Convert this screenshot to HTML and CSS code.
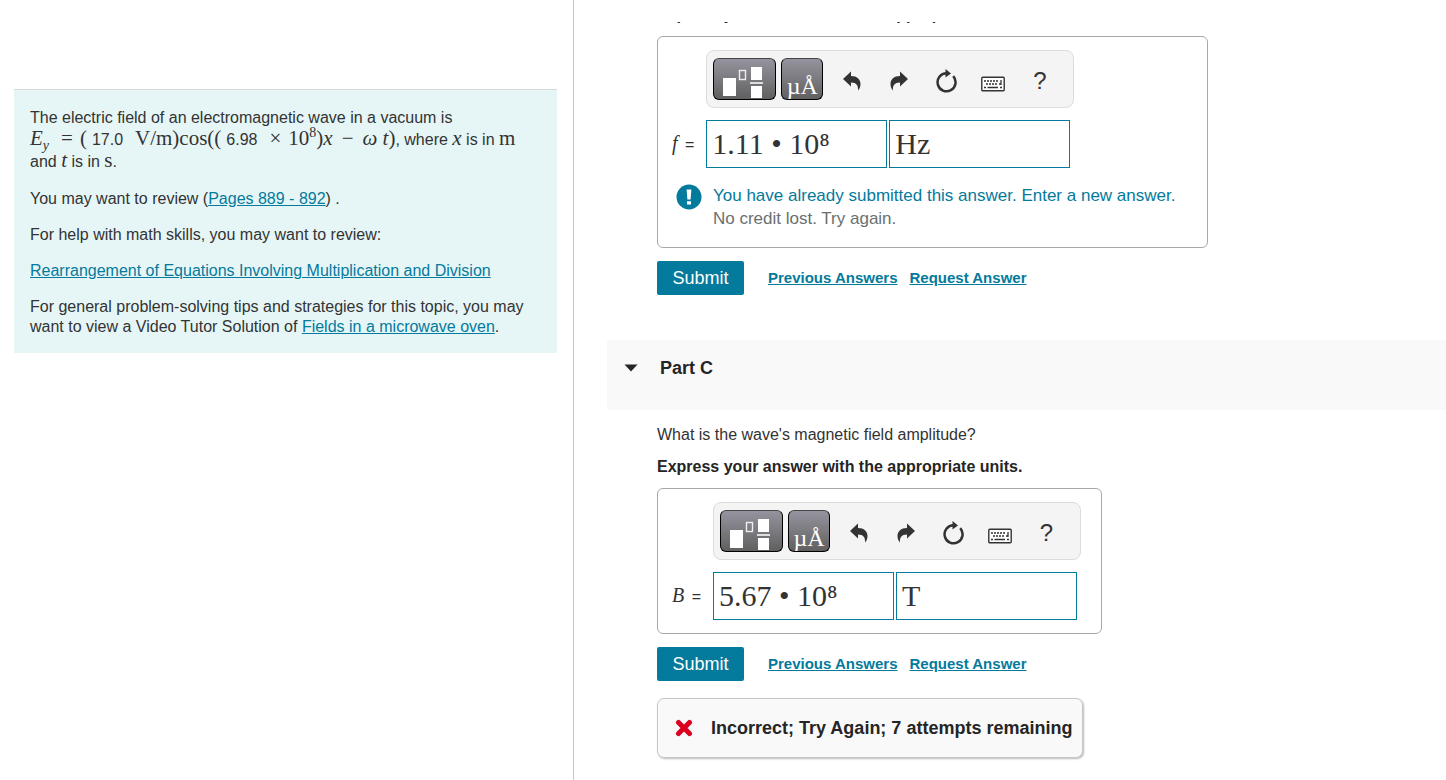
FILE: index.html
```html
<!DOCTYPE html>
<html lang="en">
<head>
    <meta charset="UTF-8">
    <meta name="viewport" content="width=device-width, initial-scale=1.0">
    <title>Electromagnetic Wave</title>
    <link rel="stylesheet" href="styles.css">
</head>
<body>

<!-- Shared icons -->
<svg class="sprite" width="0" height="0" aria-hidden="true">
    <symbol id="icon-template" viewBox="0 0 61 40">
        <rect x="9" y="19" width="13" height="18" fill="#fff"/>
        <rect x="25.5" y="11.5" width="6" height="9" fill="none" stroke="#eee" stroke-width="1.4"/>
        <rect x="37" y="8" width="11" height="13" fill="#fff"/>
        <rect x="36" y="23" width="13" height="2" fill="#ddd"/>
        <rect x="37" y="27" width="11" height="12" fill="#fff"/>
    </symbol>
    <symbol id="icon-undo" viewBox="0 0 18 20">
        <path d="M0 8 L8 0.5 V5 C14 5 17.5 8.5 17.5 13 C17.5 15.5 16.8 17.5 15 19.5 C15.5 14.5 13.5 11.5 8 11.5 V15.5 Z" fill="#333"/>
    </symbol>
    <symbol id="icon-redo" viewBox="0 0 18 20">
        <path d="M18 8 L10 0.5 V5 C4 5 0.5 8.5 0.5 13 C0.5 15.5 1.2 17.5 3 19.5 C2.5 14.5 4.5 11.5 10 11.5 V15.5 Z" fill="#333"/>
    </symbol>
    <symbol id="icon-reset" viewBox="0 0 22 24">
        <path d="M11.5 4.3 A9 9 0 1 0 18.2 7.2" fill="none" stroke="#333" stroke-width="2.5"/>
        <path d="M10.5 0 L16 4.5 L10.5 8.5 Z" fill="#333"/>
    </symbol>
    <symbol id="icon-keyboard" viewBox="0 0 24 16">
        <rect x="0.8" y="1.3" width="22.4" height="13.4" rx="1" fill="#fff" stroke="#333" stroke-width="1.4"/>
        <path d="M3 5 H18 M5 8 H17" stroke="#333" stroke-width="1.6" stroke-dasharray="2 1" fill="none"/>
        <path d="M20 4 V9 M18 8 H20.5" stroke="#333" stroke-width="1.3" fill="none"/>
        <path d="M3 11.5 H5 M6.5 11.5 H17 M19 11.5 H21" stroke="#333" stroke-width="1.6"/>
    </symbol>
</svg>

<div class="page">
    <aside class="sidebar">
        <div class="problem">
            <p class="formula">The electric field of an electromagnetic wave in a vacuum is
                <span class="equation"><i>E</i><sub><i>y</i></sub><span class="equals">=</span>(<span class="number">17.0</span><span class="volt">V/m)</span>cos((<span class="number">6.98</span><span class="times">×</span>10<sup>8</sup>)<i>x</i><span class="minus">−</span><i>ω</i> <i>t</i>)</span>, where <i class="var">x</i> is in <span class="var">m</span> and <i class="var">t</i> is in <span class="var">s</span>.</p>
            <p>You may want to review (<a href="#">Pages 889 - 892</a>) .</p>
            <p>For help with math skills, you may want to review:</p>
            <p><a href="#">Rearrangement of Equations Involving Multiplication and Division</a></p>
            <p>For general problem-solving tips and strategies for this topic, you may want to view a Video Tutor Solution of <a href="#">Fields in a microwave oven</a>.</p>
        </div>
    </aside>

    <main class="parts">
        <section class="part part-b">
            <div class="scrolled"><p class="instructions">Express your answer with the appropriate units.</p></div>
            <form class="answer-box">
                <div class="entry">
                    <div class="toolbar">
                        <button type="button" class="key key-wide" aria-label="Templates"><svg width="61" height="40"><use href="#icon-template"/></svg></button>
                        <button type="button" class="key" aria-label="Symbols">µÅ</button>
                        <button type="button" class="tool" aria-label="Undo"><svg width="18" height="20"><use href="#icon-undo"/></svg></button>
                        <button type="button" class="tool" aria-label="Redo"><svg width="18" height="20"><use href="#icon-redo"/></svg></button>
                        <button type="button" class="tool" aria-label="Reset"><svg width="22" height="24"><use href="#icon-reset"/></svg></button>
                        <button type="button" class="tool tool-low" aria-label="Keyboard shortcuts"><svg width="24" height="16"><use href="#icon-keyboard"/></svg></button>
                        <button type="button" class="tool" aria-label="Help">?</button>
                    </div>
                    <label for="f-value"><i>f</i> =</label>
                    <div class="fields">
                        <input id="f-value" type="text" value="1.11 • 10⁸">
                        <input class="units" type="text" value="Hz" aria-label="Units of f">
                    </div>
                </div>
                <div class="message">
                    <svg width="26" height="26" viewBox="0 0 26 26"><circle cx="13" cy="13" r="12.5" fill="#047a9c"/><path d="M10.6 5.5 H15.4 L14.6 15.5 H11.4 Z M11 17.2 H15 V20.5 H11 Z" fill="#fff"/></svg>
                    <p><span class="notice">You have already submitted this answer. Enter a new answer.</span><br>No credit lost. Try again.</p>
                </div>
            </form>
            <div class="actions">
                <button type="button" class="submit">Submit</button>
                <a href="#">Previous Answers</a>
                <a href="#">Request Answer</a>
            </div>
        </section>

        <h2 class="part-header">
            <svg width="14" height="8" viewBox="0 0 14 8"><path d="M0.5 0.5 H13.5 L7 7.5 Z" fill="#252525"/></svg>
            Part C
        </h2>

        <section class="part">
            <p class="question">What is the wave's magnetic field amplitude?</p>
            <p class="instructions">Express your answer with the appropriate units.</p>
            <form class="answer-box">
                <div class="entry">
                    <div class="toolbar">
                        <button type="button" class="key key-wide" aria-label="Templates"><svg width="61" height="40"><use href="#icon-template"/></svg></button>
                        <button type="button" class="key" aria-label="Symbols">µÅ</button>
                        <button type="button" class="tool" aria-label="Undo"><svg width="18" height="20"><use href="#icon-undo"/></svg></button>
                        <button type="button" class="tool" aria-label="Redo"><svg width="18" height="20"><use href="#icon-redo"/></svg></button>
                        <button type="button" class="tool" aria-label="Reset"><svg width="22" height="24"><use href="#icon-reset"/></svg></button>
                        <button type="button" class="tool tool-low" aria-label="Keyboard shortcuts"><svg width="24" height="16"><use href="#icon-keyboard"/></svg></button>
                        <button type="button" class="tool" aria-label="Help">?</button>
                    </div>
                    <label for="b-value"><i>B</i> =</label>
                    <div class="fields">
                        <input id="b-value" type="text" value="5.67 • 10⁸">
                        <input class="units" type="text" value="T" aria-label="Units of B">
                    </div>
                </div>
            </form>
            <div class="actions">
                <button type="button" class="submit">Submit</button>
                <a href="#">Previous Answers</a>
                <a href="#">Request Answer</a>
            </div>
            <div class="feedback">
                <svg width="18" height="18" viewBox="0 0 18 18"><path d="M3.5 3.5 L14.5 14.5 M14.5 3.5 L3.5 14.5" stroke="#db0020" stroke-width="5" stroke-linecap="round"/></svg>
                Incorrect; Try Again; 7 attempts remaining
            </div>
        </section>
    </main>
</div>

</body>
</html>
```

FILE: styles.css
```css
* {
    box-sizing: border-box;
}

body {
    margin: 0;
    background-color: #fff;
    color: #333;
    font-family: "Liberation Sans", Arial, sans-serif;
    font-size: 16px;
    line-height: 20px;
}

p {
    margin: 0;
}

a {
    color: #047a9c;
}

.sprite {
    position: absolute;
}

.page {
    display: grid;
    grid-template-columns: 287fr 436fr;
    min-height: 100vh;
}

/* Problem statement */
.sidebar {
    padding: 89px 16px 0 14px;
    border-right: 1px solid #bcc6d6;
}

.problem {
    display: flex;
    flex-direction: column;
    gap: 16px;
    padding: 17px 16px 16px;
    border-top: 1px solid #d9d9d9;
    background-color: #e6f6f7;
}

.formula {
    line-height: 22px;
}

.equation {
    white-space: nowrap;
}

.equation,
.var {
    font-family: "Liberation Serif", "Times New Roman", serif;
    font-size: 21px;
    line-height: 0;
}

.equation sub,
.equation sup {
    font-size: 14px;
}

.equation .number {
    margin: 0 5px;
    font-family: "Liberation Sans", Arial, sans-serif;
    font-size: 16px;
}

.equals {
    margin: 0 7px 0 12px;
}

.volt {
    margin-left: 7px;
}

.times {
    margin: 0 7px;
}

.minus {
    margin: 0 9px;
}

/* Parts */
.part {
    padding: 15px 83px 0;
}

.part-b {
    padding-top: 22px;
}

/* Line that is scrolled out of view, only its last row shows */
.scrolled {
    display: flex;
    align-items: flex-end;
    height: 1px;
    margin-bottom: 13px;
    overflow: hidden;
    line-height: 17px;
}

.instructions {
    color: #252525;
    font-weight: bold;
}

.question {
    margin-bottom: 12px;
}

.question + .instructions {
    margin-bottom: 11px;
}

.answer-box {
    width: fit-content;
    padding: 13px 20px 13px 14px;
    border: 1px solid #a6a8ab;
    border-radius: 6px;
}

.entry {
    display: grid;
    grid-template-columns: auto auto;
    justify-content: start;
    gap: 12px;
}

.toolbar {
    grid-column: 2;
    display: flex;
    align-items: center;
    width: 368px;
    height: 58px;
    padding: 0 6px;
    border: 1px solid #dcdcdc;
    border-radius: 8px;
    background-color: #f4f4f4;
}

.key {
    width: 42px;
    height: 42px;
    margin-right: 5px;
    padding: 14px 0 0;
    border: 1px solid #000;
    border-top-color: #444;
    border-radius: 6px;
    background: linear-gradient(#95949f, #606060);
    color: #fff;
    font: 24px/24px "Liberation Serif", "Times New Roman", serif;
}

.key-wide {
    width: 63px;
    padding: 0;
}

.key svg {
    display: block;
}

.tool {
    display: flex;
    align-items: center;
    justify-content: center;
    width: 47px;
    height: 42px;
    padding: 4px 0 0;
    border: 0;
    background: none;
    color: #333;
    font: 24px "Liberation Sans", Arial, sans-serif;
}

.tool-low {
    padding-top: 10px;
}

label {
    align-self: center;
    font-size: 16px;
}

label i {
    margin-right: 3px;
    font-family: "Liberation Serif", "Times New Roman", serif;
    font-size: 20px;
}

.fields {
    display: flex;
    gap: 2px;
}

.fields input {
    width: 181px;
    height: 48px;
    padding: 0 5px;
    border: 1px solid #047a9c;
    background-color: #fff;
    color: #333;
    font: 30px "Liberation Serif", "Times New Roman", serif;
}

.message {
    display: flex;
    gap: 11px;
    margin-top: 16px;
    padding: 0 12px 4px 4px;
    color: #6a7070;
    font-size: 17px;
    line-height: 23px;
}

.notice {
    color: #047a9c;
}

.actions {
    display: flex;
    align-items: center;
    gap: 12px;
    margin-top: 13px;
    font-size: 15px;
    font-weight: bold;
}

.submit {
    width: 87px;
    height: 34px;
    margin-right: 12px;
    padding: 0;
    border: 0;
    border-radius: 2px;
    background-color: #047a9c;
    color: #fff;
    font: 18px "Liberation Sans", Arial, sans-serif;
}

.part-header {
    display: flex;
    align-items: center;
    gap: 22px;
    height: 70px;
    margin: 45px 0 0 33px;
    padding: 0 17px 14px;
    background-color: #f9f9f9;
    color: #252525;
    font-size: 18px;
}

.feedback {
    display: flex;
    align-items: center;
    gap: 18px;
    width: fit-content;
    height: 60px;
    margin-top: 17px;
    padding: 0 10px 0 17px;
    border: 1px solid #c7c7c7;
    border-radius: 7px;
    background-color: #f9f9f9;
    box-shadow: 1px 1px 2px #bbb;
    color: #252525;
    font-size: 18px;
    font-weight: bold;
}
```
